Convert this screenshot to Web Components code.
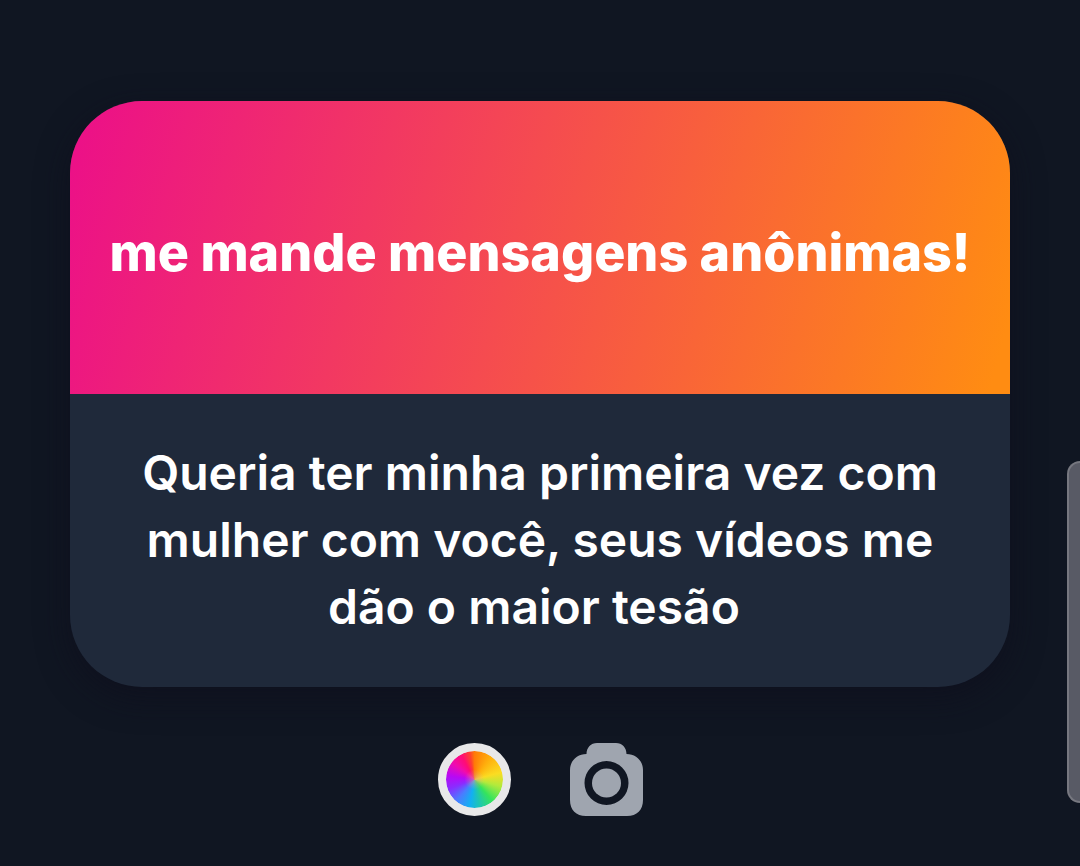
<!DOCTYPE html>
<html lang="pt-BR">
<head>
<meta charset="utf-8">
<meta name="viewport" content="width=device-width, initial-scale=1">
<title>Mensagens anônimas</title>
<style>
  html { background: #101622; }
  body { margin: 0; font-family: Inter, "Liberation Sans", sans-serif; color: #fff; }
</style>
</head>
<body>
<story-page>
  <message-card>
    <span slot="prompt">me mande mensagens anônimas!</span>
    <span slot="message">Queria ter minha primeira vez com mulher com você, seus vídeos me dão o maior tesão&nbsp;</span>
  </message-card>
  <tool-bar slot="tools">
    <color-button></color-button>
    <camera-button></camera-button>
  </tool-bar>
  <edge-handle slot="edge"></edge-handle>
</story-page>
<script>
  const define = (name, html) => {
    const template = document.createElement('template');
    template.innerHTML = html;
    customElements.define(name, class extends HTMLElement {
      constructor() {
        super();
        this.attachShadow({ mode: 'open' }).append(template.content.cloneNode(true));
      }
    });
  };

  define('story-page', `
    <style>
      :host { display: block; position: relative; min-height: 100vh; box-sizing: border-box; padding: 101px 70px 50px; overflow: hidden; }
      main { display: flex; flex-direction: column; gap: 56px; }
    </style>
    <main><slot></slot><slot name="tools"></slot></main>
    <slot name="edge"></slot>
  `);

  define('message-card', `
    <style>
      :host { display: block; border-radius: 72px; overflow: hidden; background: #1f293a; text-align: center; box-shadow: 0 10px 32px rgba(14, 14, 28, 0.7); }
      header { display: grid; place-items: center; min-height: 293px; box-sizing: border-box; padding: 20px 24px 10px; background: linear-gradient(105deg, #ec1187 2%, #ff8c12 98%); }
      h1 { margin: 0; font-size: 52px; line-height: 62px; font-weight: 800; }
      p { margin: 0; padding: 45px 64px 47px; font-size: 48px; line-height: 67px; font-weight: 600; }
    </style>
    <header><h1><slot name="prompt"></slot></h1></header>
    <p><slot name="message"></slot></p>
  `);

  define('tool-bar', `
    <style>
      :host { display: flex; justify-content: center; gap: 59px; }
    </style>
    <slot></slot>
  `);

  define('color-button', `
    <style>
      :host { display: block; }
      button { display: block; width: 73px; height: 73px; padding: 0; border: 8px solid #e8e8e9; border-radius: 50%; cursor: pointer;
        background:
          radial-gradient(circle, rgba(220, 160, 140, 0.6), rgba(220, 160, 140, 0) 10px) padding-box,
          conic-gradient(#ff7a08, #ffae0c 35deg, #fbdc22 75deg, #b2ea3c 105deg, #35e45c 140deg, #1fc6b0 168deg, #12b0f2 190deg, #4a7cff 220deg, #8a2cff 250deg, #b808f4 278deg, #f00cae 308deg, #ff0c74 332deg, #ff4030 350deg, #ff7a08) padding-box,
          linear-gradient(#e8e8e9, #e8e8e9) border-box; }
    </style>
    <button type="button" aria-label="Cor"></button>
  `);

  define('camera-button', `
    <style>
      :host { display: block; }
      button { display: block; width: 73px; height: 73px; padding: 0; border: 0; background: none; color: #9fa5af; cursor: pointer; }
      svg { display: block; width: 100%; height: 100%; }
    </style>
    <button type="button" aria-label="Câmera">
      <svg viewBox="0 0 73 73" aria-hidden="true">
        <path fill="currentColor" fill-rule="evenodd" d="M27 0H46C52 0 56.500 4.500 56.500 11C66 11 73 18 73 27V57C73 67 67 73 57 73H16C6 73 0 67 0 57V27C0 18 7 11 16.500 11C16.500 4.500 21 0 27 0ZM36.500 18a22 22 0 1 0 0 44a22 22 0 1 0 0-44Z"/>
        <circle fill="currentColor" cx="36.500" cy="40" r="14.500"/>
      </svg>
    </button>
  `);

  define('edge-handle', `
    <style>
      :host { display: block; position: absolute; right: 0; top: 461px; width: 13px; height: 342px; box-sizing: border-box;
        border: 2px solid #777880; border-right: 0; border-radius: 13px 0 0 13px; background: #585a65; }
    </style>
  `);
</script>
</body>
</html>
